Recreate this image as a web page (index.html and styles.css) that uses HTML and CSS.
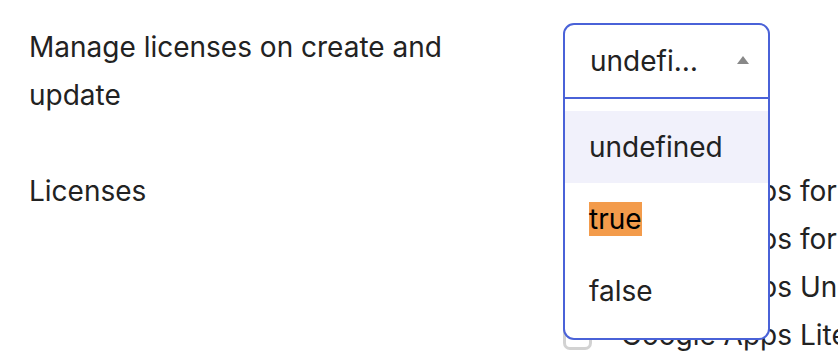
FILE: index.html
```html
<!DOCTYPE html>
<html>
    <head>
        <title> License settings </title>
        <link rel="stylesheet" href="styles.css">
    </head>
    <body>
        <div class="settings">
            <div class="row">
                <div class="label">Manage licenses on create and update</div>
                <div class="field">
                    <div class="select is-open">
                        <span class="select-value">undefined</span>
                        <span class="select-arrow"></span>
                    </div>
                    <ul class="menu">
                        <li class="menu-item is-active">undefined</li>
                        <li class="menu-item"><mark class="match">true</mark></li>
                        <li class="menu-item">false</li>
                    </ul>
                </div>
            </div>

            <div class="row">
                <div class="label">Licenses</div>
                <div class="field">
                    <label class="check"><span class="box"></span>Google Apps for Business</label>
                    <label class="check"><span class="box"></span>Google Apps for Postini</label>
                    <label class="check"><span class="box"></span>Google Apps Unlimited</label>
                    <label class="check"><span class="box"></span>Google Apps Lite</label>
                </div>
            </div>
        </div>
    </body>
</html>
```

FILE: styles.css
```css
body{
    margin: 0;
    font-family: Inter, "Noto Sans", sans-serif;
    font-size: 28px;
    line-height: 48px;
    color: #222;
    background: #fff;
    overflow: hidden;
}
.settings{
    padding: 23px 0 0 29px;
    display: flex;
    flex-direction: column;
    gap: 48px;
}
.row{
    display: grid;
    grid-template-columns: 534px 1fr;
}
.label{
    padding-right: 80px;
}
.field{
    position: relative;
}

/* select, shown open */
.select{
    width: 207px;
    height: 76px;
    box-sizing: border-box;
    border: 2px solid #4a62d8;
    border-radius: 11px 11px 0 0;
    padding: 0 19px 0 25px;
    display: flex;
    align-items: center;
    gap: 28px;
    background: #fff;
}
.select-value{
    flex: 1;
    min-width: 0;
    overflow: hidden;
    white-space: nowrap;
    text-overflow: ellipsis;
}
.select-arrow{
    width: 0;
    height: 0;
    border-left: 6px solid transparent;
    border-right: 6px solid transparent;
    border-bottom: 8px solid #888;
    margin-top: -2px;
}
.menu{
    position: absolute;
    top: 74px;
    left: 0;
    width: 207px;
    box-sizing: border-box;
    margin: 0;
    padding: 12px 0 11px 0;
    list-style: none;
    background: #fff;
    border: 2px solid #4a62d8;
    border-radius: 0 0 11px 11px;
    z-index: 2;
}
.menu-item{
    height: 72px;
    line-height: 72px;
    padding-left: 24px;
}
.menu-item.is-active{
    background: #f1f1fb;
}
.match{
    background: #f39b4b;
    color: #000;
}

/* checkbox list */
.check{
    display: flex;
    align-items: center;
    white-space: nowrap;
    height: 48px;
}
.box{
    width: 29px;
    height: 29px;
    box-sizing: border-box;
    border: 3px solid #d2d2d2;
    border-radius: 7px;
    margin-right: 29px;
    flex: none;
}
```
